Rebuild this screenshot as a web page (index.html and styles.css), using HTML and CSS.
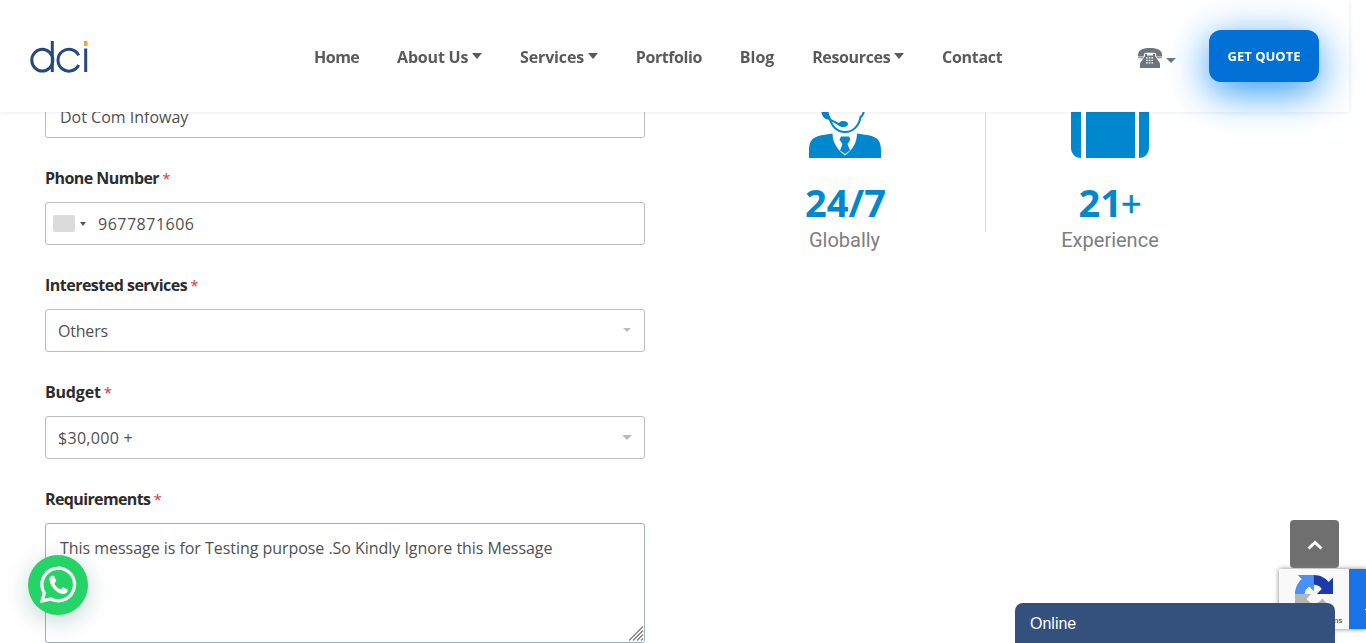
FILE: index.html
```html
<!DOCTYPE html>
<html lang="en">
<head>
<meta charset="utf-8">
<title>Dot Com Infoway</title>
<link rel="stylesheet" href="styles.css">
</head>
<body>
<header class="header">
  <svg class="logo" width="60" height="36" viewBox="0 0 60 36" fill="none" stroke="#27487f" stroke-width="3">
    <ellipse cx="12.300" cy="20.200" rx="10.500" ry="10.900"/>
    <path d="M22.300 1v31M48.700 15.400A10.900 10.900 0 1 0 48.700 25M55.700 8.500V32"/>
    <path d="M55.700 1v5" stroke="#f9a12e" stroke-width="3.400"/>
  </svg>
  <nav class="nav">
    <a class="n1">Home</a>
    <a class="n2">About Us<i class="caret"></i></a>
    <a class="n3">Services<i class="caret"></i></a>
    <a class="n4">Portfolio</a>
    <a class="n5">Blog</a>
    <a class="n6">Resources<i class="caret"></i></a>
    <a class="n7">Contact</a>
  </nav>
  <div class="phone">
    <svg width="26" height="22" viewBox="0 0 26 22" fill="#6c757d">
      <path d="M1 9.500V8C1 3.200 5 1 13 1s12 2.200 12 7v1.500h-5.800V8c0-1.500-.7-2.200-2.200-2.200H9C7.500 5.800 6.800 6.500 6.800 8v1.500z"/>
      <path d="M1 10.200h5.500L6 11.200H1.500zM19.500 10.200H25l-.5 1h-4.500z"/>
      <path d="M8 7h2v1.500h6V7h2v2l4.500 6.500c.5.800.5 1.500.5 3V21H3v-2.500c0-1.500 0-2.200.5-3L8 9z"/>
      <path stroke="#fff" stroke-width="1.200" stroke-dasharray="1.700 1" d="M9 10.800h8M9 13.300h8M9 15.800h8"/>
    </svg>
    <i class="caret"></i>
  </div>
  <a class="quote">GET QUOTE</a>
</header>
<main class="page">
  <form class="form">
    <div class="field"><div class="control">Dot Com Infoway</div></div>
    <div class="field"><label><span class="l1">Phone Number</span> <em>*</em></label>
      <div class="control tel"><i class="flag"></i><i class="tri"></i><span class="t2">9677871606</span></div></div>
    <div class="field"><label><span class="l2">Interested services</span> <em>*</em></label>
      <div class="control select"><span class="t3">Others</span><i class="arrow small"></i></div></div>
    <div class="field"><label><span class="l3">Budget</span> <em>*</em></label>
      <div class="control select"><span class="t4">$30,000 +</span><i class="arrow"></i></div></div>
    <div class="field"><label><span class="l4">Requirements</span> <em>*</em></label>
      <div class="control area"><span class="t5">This message is for Testing purpose .So Kindly Ignore this Message</span>
        <svg class="grip" width="15" height="15" viewBox="0 0 15 15" stroke="#777" stroke-width="1.200"><path d="M0 14.500 14 .5M4 14.500l10-10M8 14.500l6-6M12 14.500l2-2"/></svg></div></div>
  </form>
  <section class="stats">
    <div class="stat">
      <svg width="74" height="78" viewBox="0 0 74 78" fill="#0088ce">
        <path d="M13 30h7l2 8.500 9 4.500c1-1.500 2.500-2 4-2 3 0 5 1 5 3s-2 3-4.500 3-4.500-.5-5.500-2L20 39.500C16 39.500 14 36 13 30z"/>
        <path d="M21 36c2 10 8 16 16 16s14-6 15.500-15c2-1 3.500-4 3.500-9" fill="none" stroke="#0088ce" stroke-width="2"/>
        <path d="M1 78V71c0-10 3-13 11-15.500l12.500-2c0 9 5 16.500 12.500 22 7.500-5.500 12-13 12-22L62 55.500c8 2.500 11 5.500 11 15.500v7z"/>
        <path d="M33 56.500h8l1.500 3-3 4.500 2.500 6.500L37 74l-5-3.500 2.500-6.500-3-4.500z"/>
      </svg>
      <strong>24/7</strong><p>Globally</p>
    </div>
    <div class="stat second">
      <svg width="78" height="78" viewBox="0 0 78 78" fill="#0088ce"><path d="M10 10v68C4 78 0 73 0 68V20Q0 10 10 10M15 10h49v68H15zM68 10q10 0 10 10v48c0 5-4 10-10 10z"/></svg>
      <strong>21<b>+</b></strong><p>Experience</p>
    </div>
  </section>
</main>
<div class="whatsapp">
  <svg width="38" height="38" viewBox="0 0 38 38" fill="none">
    <path d="M3.200 35 5.300 27A16.300 16.300 0 1 1 11.700 33z" stroke="#fff" stroke-width="3.300"/>
    <path d="M10.500 12c1-2 3-2.500 4.500-2.200l2.300 5.200-2 2.400c1.500 3 3.500 4.700 6.300 6l2.400-2.200 4.800 2.600c0 2.500-1.600 4-3.800 4.200C18 28 10 20 10.500 12z" fill="#fff"/>
  </svg>
</div>
<div class="totop"><svg width="16" height="10" viewBox="0 0 16 10" fill="none" stroke="#fff" stroke-width="3"><path d="m1.500 8.500 6.500-6 6.500 6"/></svg></div>
<div class="captcha">
  <div class="badge">
    <svg width="38" height="38" viewBox="0 0 64 64">
      <path fill="#1c3aa9" d="M64 31.955l-.033-1.370V4.687l-7.160 7.160C50.948 4.674 42.033.093 32.050.093c-10.400 0-19.622 4.960-25.458 12.640l11.736 11.860a15.550 15.550 0 0 1 4.754-5.334c2.050-1.600 4.952-2.906 8.968-2.906.485 0 .860.057 1.135.163 4.976.393 9.288 3.140 11.828 7.124l-8.307 8.307z"/>
      <path fill="#4a90fb" d="M31.862.094l-1.370.033H4.594l7.160 7.160C4.580 13.147 0 22.060 0 32.046c0 10.400 4.960 19.622 12.640 25.458L24.500 45.768a15.550 15.550 0 0 1-5.334-4.754c-1.600-2.050-2.906-4.952-2.906-8.968 0-.485.057-.860.163-1.135.393-4.976 3.140-9.288 7.124-11.828l8.307 8.307z"/>
      <path fill="#b6b6b6" d="M0 32.045l.033 1.370v25.898l7.160-7.160c5.860 7.173 14.774 11.754 24.760 11.754 10.400 0 19.622-4.960 25.458-12.640l-11.736-11.860a15.550 15.550 0 0 1-4.754 5.334c-2.050 1.600-4.952 2.906-8.968 2.906-.485 0-.860-.057-1.135-.163-4.976-.393-9.288-3.140-11.828-7.124l8.307-8.307z"/>
    </svg>
    <small>Privacy - Terms</small>
  </div>
  <div class="blue"></div>
</div>
<div class="chat">Online</div>
</body>
</html>
```
FILE: styles.css
```css
* { box-sizing: border-box; }
html, body { margin: 0; height: 100%; overflow: hidden; }
body { background: #fff; color: #505050; font: 16px "Open Sans", sans-serif; }
.header { position: fixed; z-index: 5; top: 0; left: 0; width: 1349px; height: 112px; background: #fff; box-shadow: 0 0 4px rgba(0, 0, 0, .1); display: flex; align-items: flex-start; }
.logo { margin: 40px 0 0 30px; flex: none; }
.nav { display: flex; align-items: center; gap: 37.8px; height: 24px; margin: 45px 0 0 224px; width: 823px; font-weight: 700; color: #5a5a5a; flex: none; }
.nav a { display: flex; align-items: center; flex: none; white-space: nowrap; }
.n1 { letter-spacing: -.5px; }
.n2 { letter-spacing: -.2px; }
.n3 { letter-spacing: -.15px; }
.n4 { letter-spacing: -.42px; }
.n6 { letter-spacing: -.35px; }
.n7 { letter-spacing: -.3px; }
.caret { width: 0; height: 0; border: 5px solid transparent; border-top-color: currentColor; border-bottom: 0; flex: none; }
.nav .caret { border-top-width: 6px; margin: -2px 0 0 4px; }
.phone { display: flex; margin-top: 47px; color: #6c757d; width: 73px; flex: none; }
.phone .caret { margin: 11px 0 0 3px; }
.quote { width: 110px; height: 52px; border-radius: 12px; background: #0170d7; color: #fff; font-size: 13px; font-weight: 700; display: flex; align-items: center; justify-content: center; margin: 30px 0 0 -1px; box-shadow: 0 10px 40px #2997ff; }
.page { display: flex; padding: 95px 0 0 45px; }
.form { width: 600px; flex: none; }
.field { margin-bottom: 28px; }
.field label { display: block; height: 25px; line-height: 25px; margin-bottom: 11px; font-weight: 700; color: #2c2c2c; }
.field em { font-style: normal; font-weight: 400; font-size: 15px; margin-left: -1px; color: #d9363e; }
.l1 { letter-spacing: -.55px; }
.l2 { letter-spacing: -.51px; }
.l3 { letter-spacing: -.2px; }
.l4 { letter-spacing: -.62px; }
.t2 { letter-spacing: .5px; }
.t3 { letter-spacing: -.2px; }
.t4 { letter-spacing: .3px; }
.t5 { letter-spacing: -.04px; }
.control { height: 43px; border: 1px solid #bcbcbc; border-radius: 3px; padding: 0 14px; display: flex; align-items: center; background: #fff; white-space: nowrap; }
.tel { padding-left: 7px; }
.flag { width: 22px; height: 17px; border-radius: 2px; background: #dbdbdb; }
.tri { border: 3px solid transparent; border-top: 4px solid #555; border-bottom: 0; margin: 0 12px 0 5px; }
.select { padding: 0 12px; justify-content: space-between; }
.arrow { border: 5px solid transparent; border-top-color: #bbb; border-bottom: 0; }
.arrow.small { border-width: 4px 4.5px 0; margin: -2px 1px 0 0; }
.area { height: 120px; border-color: #9fb0bd; align-items: flex-start; padding-top: 13px; position: relative; }
.grip { position: absolute; right: 0; bottom: 1px; }
.stats { display: flex; height: 160px; margin: -15px 0 0 61px; }
.stat { width: 280px; height: 152px; border-right: 1px solid #ddd; display: flex; flex-direction: column; align-items: center; flex: none; }
.stat svg { flex: none; margin-right: 2px; }
.stat.second { width: 250px; border: 0; }
.stat strong { font-size: 38px; line-height: 50px; height: 50px; margin-top: 19px; color: #0088ce; }
.stat.second strong { margin-right: 2px; }
.stat strong b { font-weight: 400; font-size: 36px; -webkit-text-stroke: .6px #0088ce; margin-left: -1px; }
.stat p { margin: 1px 2px 0 0; font: 20px/24px Roboto, sans-serif; color: #7e7e7e; }
.whatsapp { position: fixed; left: 28px; top: 555px; width: 60px; height: 60px; border-radius: 50%; background: #25d366; display: flex; align-items: center; justify-content: center; box-shadow: 0 6px 24px rgba(7, 94, 84, .24); }
.totop { position: fixed; left: 1290px; top: 520px; width: 49px; height: 48px; border-radius: 4px; background: #6f6f6f; display: flex; align-items: center; justify-content: center; padding-top: 1px; }
.captcha { position: fixed; left: 1279px; top: 569px; width: 87px; height: 60px; display: flex; border-radius: 2px 0 0 2px; box-shadow: 0 0 5px gray; }
.badge { width: 70px; background: #f9f9f9; padding: 6px 0 0 16px; }
.badge svg { display: block; }
.badge small { display: block; font: 8px/10px Roboto, sans-serif; color: #333; white-space: nowrap; margin: 3px 0 0 -7px; }
.blue { flex: 1; background: linear-gradient(#fff, #fff) right 40px / 1px 1px no-repeat #1a73e8; }
.chat { position: fixed; left: 1015px; top: 603px; width: 320px; height: 40px; border-radius: 8px 8px 0 0; background: #34507c; color: #fff; font: 16px/42px "Liberation Sans", sans-serif; padding-left: 15px; }
```
